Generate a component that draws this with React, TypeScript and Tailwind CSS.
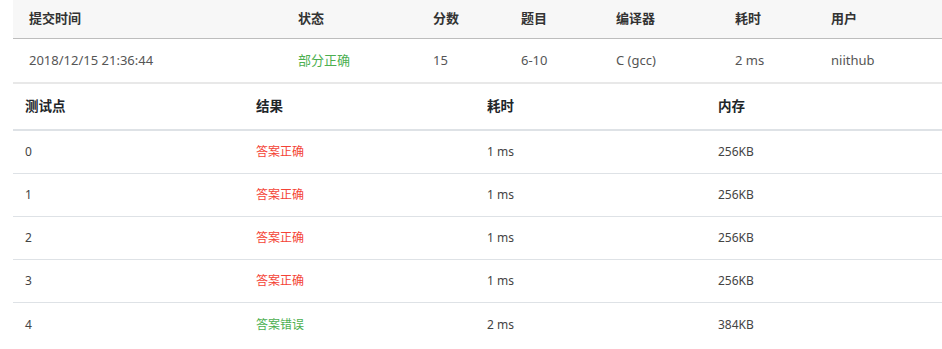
import React from 'react';

const FONT = "font-['Noto_Sans','Noto_Sans_CJK_SC',sans-serif]";

const SUMMARY_COLS = [
  { label: '提交时间', w: 'w-[269px]' },
  { label: '状态', w: 'w-[135px]' },
  { label: '分数', w: 'w-[88px]' },
  { label: '题目', w: 'w-[95px]' },
  { label: '编译器', w: 'w-[119px]' },
  { label: '耗时', w: 'w-[96px]' },
  { label: '用户', w: 'flex-1' },
];

const CASES = [
  { id: '0', ok: true, time: '1 ms', mem: '256KB' },
  { id: '1', ok: true, time: '1 ms', mem: '256KB' },
  { id: '2', ok: true, time: '1 ms', mem: '256KB' },
  { id: '3', ok: true, time: '1 ms', mem: '256KB' },
  { id: '4', ok: false, time: '2 ms', mem: '384KB' },
];

export default function App() {
  const summary = ['2018/12/15 21:36:44', '部分正确', '15', '6-10', 'C (gcc)', '2 ms', 'niithub'];

  return (
    <div className={`w-[942px] h-[349px] overflow-hidden bg-white pl-[13px] ${FONT}`}>
      {/* submission summary */}
      <div className="flex h-[39px] items-center bg-[#f7f7f7] border-b border-[#bdbdbd] text-[13px] font-bold text-[#333]">
        {SUMMARY_COLS.map((c) => (
          <div key={c.label} className={`${c.w} pl-4`}>{c.label}</div>
        ))}
      </div>
      <div className="flex h-[45px] items-center border-b-2 border-[#e8e8e8] text-[13px] text-[#555]">
        {summary.map((v, i) => (
          <div key={i} className={`${SUMMARY_COLS[i].w} pl-4 ${i === 1 ? 'text-[#4caf50]' : ''}`}>{v}</div>
        ))}
      </div>

      {/* test points */}
      <div className="grid grid-cols-[231px_231px_231px_1fr] h-[47px] items-center border-b-2 border-[#dee2e6] text-[13.5px] font-bold text-[#212529]">
        <div className="pl-3">测试点</div>
        <div className="pl-3">结果</div>
        <div className="pl-3">耗时</div>
        <div className="pl-3">内存</div>
      </div>
      {CASES.map((c, i) => (
        <div
          key={c.id}
          className={`grid grid-cols-[231px_231px_231px_1fr] h-[43px] items-center text-[12px] text-[#444] ${i < CASES.length - 1 ? 'border-b border-[#dee2e6]' : ''}`}
        >
          <div className="pl-3">{c.id}</div>
          <div className={`pl-3 ${c.ok ? 'text-[#f44336]' : 'text-[#4caf50]'}`}>{c.ok ? '答案正确' : '答案错误'}</div>
          <div className="pl-3">{c.time}</div>
          <div className="pl-3">{c.mem}</div>
        </div>
      ))}
    </div>
  );
}
